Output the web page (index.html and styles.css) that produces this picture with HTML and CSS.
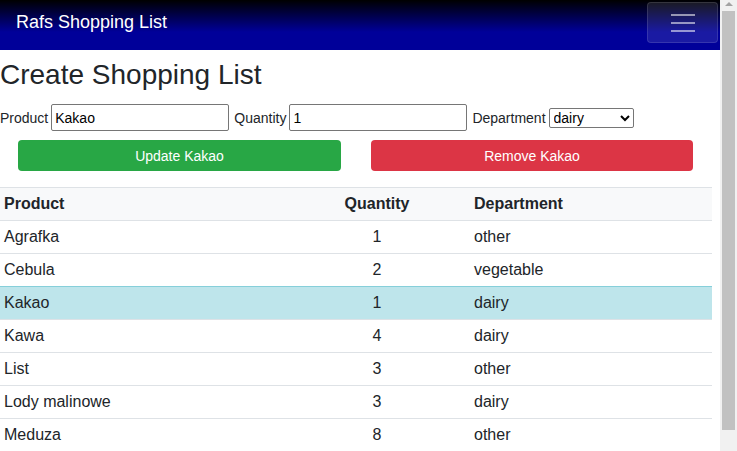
FILE: index.html
```html
<!DOCTYPE html>
<html>
<head>
<meta charset="utf-8">
<link rel="stylesheet" href="styles.css">
</head>
<body>
<div class="window">
  <div class="page">
    <nav class="navbar">
      <span class="brand">Rafs Shopping List</span>
      <button class="toggler" type="button" aria-label="Menu">
        <svg width="26" height="20" viewBox="0 0 26 20"><g stroke="rgba(255,255,255,0.55)" stroke-width="2"><line x1="1" y1="2" x2="25" y2="2"/><line x1="1" y1="10" x2="25" y2="10"/><line x1="1" y1="18" x2="25" y2="18"/></g></svg>
      </button>
    </nav>
    <main class="content">
      <h1 class="title">Create Shopping List</h1>
      <form class="form-row">
        <label class="lbl">Product</label>
        <input class="field" type="text" value="Kakao">
        <label class="lbl">Quantity</label>
        <input class="field" type="text" value="1">
        <label class="lbl">Department</label>
        <select class="sel"><option>dairy</option></select>
      </form>
      <div class="actions">
        <button class="btn btn-green" type="button">Update Kakao</button>
        <button class="btn btn-red" type="button">Remove Kakao</button>
      </div>
      <table class="list">
        <thead>
          <tr><th class="c-prod">Product</th><th class="c-qty">Quantity</th><th class="c-dep">Department</th></tr>
        </thead>
        <tbody>
          <tr><td>Agrafka</td><td class="c-qty">1</td><td>other</td></tr>
          <tr><td>Cebula</td><td class="c-qty">2</td><td>vegetable</td></tr>
          <tr class="active"><td>Kakao</td><td class="c-qty">1</td><td>dairy</td></tr>
          <tr><td>Kawa</td><td class="c-qty">4</td><td>dairy</td></tr>
          <tr><td>List</td><td class="c-qty">3</td><td>other</td></tr>
          <tr><td>Lody malinowe</td><td class="c-qty">3</td><td>dairy</td></tr>
          <tr><td>Meduza</td><td class="c-qty">8</td><td>other</td></tr>
        </tbody>
      </table>
    </main>
  </div>
  <div class="scrollbar">
    <div class="arrow"></div>
    <div class="thumb"></div>
  </div>
</div>
</body>
</html>
```
FILE: styles.css
```css
html, body {
  margin: 0;
  padding: 0;
}
body {
  font-family: "Liberation Sans", Arial, sans-serif;
  color: #212529;
  font-size: 16px;
  background: #fff;
}
.window {
  display: flex;
  height: 451px;
  overflow: hidden;
}
.page {
  width: 720px;
  flex: none;
}
.scrollbar {
  width: 17px;
  flex: none;
  background: #f1f1f1;
  display: flex;
  flex-direction: column;
  align-items: center;
}
.arrow {
  margin-top: 2px;
  width: 0;
  height: 0;
  border-left: 4px solid transparent;
  border-right: 4px solid transparent;
  border-bottom: 4px solid #a3a3a3;
}
.thumb {
  margin-top: 5px;
  width: 13px;
  height: 419px;
  background: #c1c1c1;
}
.navbar {
  height: 50px;
  box-sizing: border-box;
  display: flex;
  align-items: flex-start;
  justify-content: space-between;
  background: linear-gradient(to bottom, #000000 0px, #000099 32px, #000099 50px);
  padding: 2px 2px 0 16px;
}
.brand {
  color: #fff;
  font-size: 18px;
  line-height: 40px;
}
.toggler {
  width: 71px;
  height: 41px;
  border: 1px solid rgba(255,255,255,0.12);
  border-radius: 4px;
  background: rgba(255,255,255,0.1);
  display: flex;
  align-items: center;
  justify-content: center;
  padding: 0;
}
.content {
  margin-right: 8px;
}
.title {
  font-size: 28px;
  font-weight: 400;
  margin: 8px 0 0 0;
  line-height: 34px;
}
.form-row {
  display: flex;
  align-items: center;
  margin-top: 12px;
  font-size: 14px;
  height: 27px;
}
.lbl {
  margin-right: 3px;
}
.field {
  width: 178px;
  height: 27px;
  box-sizing: border-box;
  border: 1px solid #767676;
  border-radius: 2px;
  font-family: "Liberation Sans", Arial, sans-serif;
  font-size: 14px;
  padding: 1px 3px;
  margin-right: 5px;
  color: #000;
}
.sel {
  width: 85px;
  height: 20px;
  font-family: "Liberation Sans", Arial, sans-serif;
  font-size: 14px;
  border: 1px solid #767676;
  border-radius: 2px;
  background: #fff;
  color: #000;
}
.actions {
  display: grid;
  grid-template-columns: 323px 322px;
  column-gap: 30px;
  padding-left: 18px;
  margin-top: 9px;
}
.btn {
  height: 31px;
  border: none;
  border-radius: 4px;
  color: #fff;
  font-family: "Liberation Sans", Arial, sans-serif;
  font-size: 14px;
}
.btn-green { background: #28a745; }
.btn-red { background: #dc3545; }
.list {
  width: 712px;
  margin-top: 16px;
  border-collapse: collapse;
  table-layout: fixed;
}
.list th, .list td {
  height: 32px;
  padding: 0 4px;
  text-align: left;
  border-top: 1px solid #dee2e6;
  line-height: 20px;
}
.list thead th {
  background: #f8f9fa;
  font-weight: 700;
}
.c-prod { width: 276px; }
.list .c-qty { text-align: center; width: 178px; }
.list tr.active td {
  background: #bee5eb;
  border-top-color: #86cfda;
}
```
